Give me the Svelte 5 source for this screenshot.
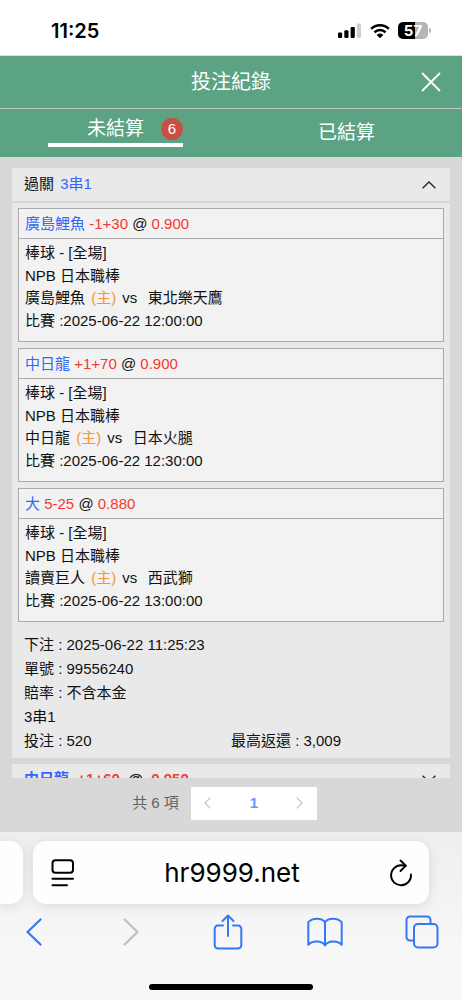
<script>
  const legs = [
    { pick: '廣島鯉魚', line: '-1+30', odds: '0.900', home: '廣島鯉魚', away: '東北樂天鷹', time: '2025-06-22 12:00:00' },
    { pick: '中日龍', line: '+1+70', odds: '0.900', home: '中日龍', away: '日本火腿', time: '2025-06-22 12:30:00' },
    { pick: '大', line: '5-25', odds: '0.880', home: '讀賣巨人', away: '西武獅', time: '2025-06-22 13:00:00' }
  ];
  const details = ['下注 : 2025-06-22 11:25:23', '單號 : 99556240', '賠率 : 不含本金', '3串1'];
</script>

<div class="screen">
  <div class="status">
    <span class="clock">11:25</span>
    <div class="signals">
      <svg width="24" height="16" viewBox="0 0 24 16" aria-hidden="true">
        <rect x="0" y="9.500" width="4.200" height="5.500" rx="1.200" />
        <rect x="6.300" y="7.200" width="4.200" height="7.800" rx="1.200" />
        <rect x="12.600" y="4" width="4.200" height="11" rx="1.200" />
        <rect x="18.900" y="0.500" width="4.200" height="14.500" rx="1.200" fill="#cfcfcf" />
      </svg>
      <svg width="20" height="16" viewBox="0 0 20 16" aria-hidden="true">
        <g fill="none" stroke="#000" stroke-width="2.500">
          <path d="M1.200 5.900a12.600 12.600 0 0 1 17.600 0" />
          <path d="M4.400 9.300a8 8 0 0 1 11.200 0" />
        </g>
        <path d="M10 15.200l-3.300-3.300a4.700 4.700 0 0 1 6.600 0z" />
      </svg>
      <div class="battery"><span>57</span></div>
    </div>
  </div>

  <header>
    <h1>投注紀錄</h1>
    <button class="close" aria-label="關閉">
      <svg width="20" height="20" viewBox="0 0 20 20"><path d="M1 1l18 18M19 1L1 19" fill="none" stroke="#fff" stroke-width="1.800" /></svg>
    </button>
  </header>

  <nav class="tabs">
    <button class="tab active"><span class="label">未結算<span class="count">6</span></span></button>
    <button class="tab">已結算</button>
  </nav>

  <main>
    <div class="list">
      <section class="bet">
        <button class="bet-head">
          <span class="kind">過關 <span class="blue">3串1</span></span>
          <svg width="14" height="8" viewBox="0 0 14 8"><path d="M0.600 7.300L7 1l6.400 6.300" fill="none" stroke="#222" stroke-width="1.300" /></svg>
        </button>
        <div class="legs">
          {#each legs as leg}
            <article>
              <div class="pick"><span class="blue">{leg.pick}</span> <span class="red">{leg.line}</span> @ <span class="red">{leg.odds}</span></div>
              <div class="match">
                <div>棒球 - [全場]</div>
                <div>NPB 日本職棒</div>
                <div>{leg.home} <span class="orange">(主)</span> vs&nbsp; <span class="away">{leg.away}</span></div>
                <div>比賽 :{leg.time}</div>
              </div>
            </article>
          {/each}
        </div>
        <div class="details">
          {#each details as row}<div>{row}</div>{/each}
          <div class="totals"><span>投注 : 520</span><span>最高返還 : 3,009</span></div>
        </div>
      </section>
      <section class="bet">
        <button class="bet-head next">
          <span><span class="blue">中日龍</span>&nbsp; <span class="red">+1+60</span>&nbsp; @&nbsp; <span class="red">0.950</span></span>
          <svg width="14" height="8" viewBox="0 0 14 8"><path d="M0.600 0.700L7 7l6.400-6.300" fill="none" stroke="#222" stroke-width="1.300" /></svg>
        </button>
      </section>
    </div>
    <div class="pager">
      <span>共 6 項</span>
      <div class="pages">
        <button aria-label="上一頁"><svg width="7" height="12" viewBox="0 0 7 12"><path d="M6.300 0.700L1 6l5.300 5.300" fill="none" stroke="#c0c4cc" stroke-width="1.200" /></svg></button>
        <button class="current">1</button>
        <button aria-label="下一頁"><svg width="7" height="12" viewBox="0 0 7 12"><path d="M0.700 0.700L6 6 0.700 11.300" fill="none" stroke="#c0c4cc" stroke-width="1.200" /></svg></button>
      </div>
    </div>
  </main>

  <footer>
    <div class="address-row">
      <div class="previous-tab"></div>
      <div class="address">
        <button aria-label="網頁選單">
          <svg width="24" height="28" viewBox="0 0 24 28"><g fill="none" stroke="#000" stroke-width="2" stroke-linecap="round"><rect x="1.500" y="1.300" width="20.500" height="12.500" rx="3" /><path d="M1.500 19.800h20.500M1.500 26.200h14.500" /></g></svg>
        </button>
        <button class="url">hr9999.net</button>
        <button aria-label="重新載入">
          <svg width="24" height="28" viewBox="0 0 24 28"><g fill="none" stroke="#000" stroke-width="1.900" stroke-linecap="round" stroke-linejoin="round"><path d="M22 15.500A10 10 0 1 1 12 6.300q2.500 0 4.700.5" /><path d="M11.500 1.500l5.300 5.200-5.300 5.300" /></g></svg>
        </button>
      </div>
    </div>
    <div class="tools">
      <button aria-label="返回"><svg width="16" height="28" viewBox="0 0 16 28"><path d="M14.500 1.500L1.500 14l13 12.500" fill="none" stroke="#3478f6" stroke-width="2.200" stroke-linecap="round" stroke-linejoin="round" /></svg></button>
      <button aria-label="前進"><svg width="16" height="28" viewBox="0 0 16 28"><path d="M1.500 1.500l13 12.500-13 12.500" fill="none" stroke="#bfbfbf" stroke-width="2.200" stroke-linecap="round" stroke-linejoin="round" /></svg></button>
      <button aria-label="分享"><svg width="30" height="36" viewBox="0 0 30 36"><g fill="none" stroke="#3478f6" stroke-width="2" stroke-linecap="round" stroke-linejoin="round"><path d="M10 11.500H5a3.300 3.300 0 0 0-3.300 3.300v16.400A3.300 3.300 0 0 0 5 34.500h20a3.300 3.300 0 0 0 3.300-3.300V14.800a3.300 3.300 0 0 0-3.300-3.300h-5M15 22V1.500M9.500 7L15 1.500 20.500 7" /></g></svg></button>
      <button aria-label="書籤"><svg width="36" height="30" viewBox="0 0 36 30"><path d="M18 5.200v23M18 5.200C15 .6 5.500.4 1.300 5.200v22.600c4.200-4.600 13.700-4.200 16.700.6 3-4.800 12.500-5.200 16.700-.6V5.200C30.500.4 21 .6 18 5.200z" fill="none" stroke="#3478f6" stroke-width="2" stroke-linejoin="round" /></svg></button>
      <button aria-label="分頁"><svg width="34" height="34" viewBox="0 0 34 34"><g fill="none" stroke="#3478f6" stroke-width="2"><rect x="9" y="9" width="23.500" height="23.500" rx="4" /><path d="M8.500 25.500H5A3.500 3.500 0 0 1 1.500 22V5A3.500 3.500 0 0 1 5 1.500h17A3.500 3.500 0 0 1 25.500 5v3.500" /></g></svg></button>
    </div>
    <div class="home-bar"></div>
  </footer>
</div>

<style>
  :global(body) {
    margin: 0;
  }
  .screen {
    display: flex;
    flex-direction: column;
    height: 100vh;
    overflow: hidden;
    background: #fff;
    color: #111;
    font: 15px/1.5 "Liberation Sans", "Noto Sans CJK TC", sans-serif;
  }
  button {
    padding: 0;
    border: 0;
    background: none;
    color: inherit;
    font: inherit;
  }
  svg {
    display: block;
  }
  .status {
    display: flex;
    justify-content: space-between;
    align-items: center;
    height: 56px;
    padding: 6px 34px 0 51px;
    box-sizing: border-box;
    border-bottom: 1px solid #cfe3da;
    flex: none;
  }
  .clock {
    font: 600 20px/24px Inter, sans-serif;
    color: #000;
  }
  .signals {
    display: flex;
    align-items: center;
    gap: 8px;
  }
  .battery {
    width: 30px;
    height: 17px;
    border-radius: 5px;
    background: linear-gradient(90deg, #000 57%, #b5b5b5 57%);
    color: #fff;
    font: 700 15px/17px Inter, sans-serif;
    text-align: center;
    position: relative;
  }
  .battery::after {
    content: "";
    position: absolute;
    left: 31px;
    top: 6px;
    width: 2px;
    height: 5px;
    border-radius: 0 2px 2px 0;
    background: #b5b5b5;
  }
  header {
    display: grid;
    grid-template-columns: 1fr auto 1fr;
    align-items: center;
    height: 53px;
    padding: 0 21px;
    border-bottom: 1px solid #c4c9c7;
    box-sizing: border-box;
    background: #5ba383;
    color: #fff;
    flex: none;
  }
  h1 {
    grid-column: 2;
    margin: 0;
    font-size: 20px;
    line-height: 30px;
    font-weight: 400;
  }
  .close {
    justify-self: end;
  }
  .tabs {
    display: grid;
    grid-template-columns: 1fr 1fr;
    height: 48px;
    background: #5ba383;
    color: #fff;
    font-size: 19px;
    line-height: 30px;
    flex: none;
  }
  .label {
    display: inline-flex;
    align-items: center;
    justify-content: flex-end;
    gap: 17px;
    width: 135px;
    height: 38px;
    padding-top: 6px;
    border-bottom: 4px solid #fff;
    box-sizing: border-box;
    vertical-align: top;
  }
  .tab.active {
    padding-bottom: 10px;
  }
  .count {
    width: 22px;
    height: 22px;
    border-radius: 50%;
    background: #c94f45;
    font-size: 15px;
    line-height: 22px;
    text-align: center;
  }
  main {
    display: flex;
    flex-direction: column;
    flex: 1 1 0;
    min-height: 0;
    padding: 11px 12px 0;
    background: #d8d8d8;
  }
  .list {
    display: flex;
    flex-direction: column;
    gap: 6px;
    flex: 1 1 0;
    min-height: 0;
    overflow: hidden;
  }
  .bet {
    flex: none;
    background: #e9e9e9;
  }
  .bet-head {
    display: flex;
    justify-content: space-between;
    align-items: center;
    width: 100%;
    height: 35px;
    padding: 0 14px 0 12px;
    border-bottom: 2px solid #d8d8d8;
  }
  .kind .blue {
    margin-left: 2px;
  }
  .next {
    height: 32px;
    font-weight: 700;
  }
  .legs {
    display: grid;
    gap: 6px;
    padding: 5px 6px 0;
  }
  article {
    border: 1px solid #aaa;
    background: #f2f2f2;
  }
  .pick {
    padding: 0 6px;
    line-height: 29px;
    border-bottom: 1px solid #aaa;
  }
  .match {
    padding: 3px 6px 9px;
  }
  .blue {
    color: #3366ff;
  }
  .red {
    color: #f5392f;
  }
  .orange {
    margin: 0 2px;
    color: #f79433;
  }
  .away {
    margin-left: 2px;
  }
  .details {
    padding: 11px 12px 5px;
    line-height: 24px;
  }
  .totals {
    display: grid;
    grid-template-columns: 1fr 1fr;
  }
  .pager {
    display: flex;
    align-items: center;
    justify-content: center;
    gap: 12px;
    height: 54px;
    padding-right: 13px;
    padding-bottom: 4px;
    box-sizing: border-box;
    color: #606266;
    flex: none;
  }
  .pages {
    display: grid;
    grid-template-columns: 34px 58px 34px;
    height: 33px;
    background: #fff;
  }
  .pages button {
    display: grid;
    place-items: center;
  }
  .pages .current {
    color: #5b9df9;
    font-weight: 700;
  }
  footer {
    flex: none;
    padding-top: 9px;
    background: linear-gradient(#eeeeef, #f7f7f7 70%);
  }
  .address-row {
    display: grid;
    grid-template-columns: 23px 1fr;
    gap: 10px;
    padding-right: 33px;
  }
  .previous-tab,
  .address {
    height: 63px;
    background: #fefefe;
    box-shadow: 0 2px 12px rgba(0, 0, 0, 0.1);
  }
  .previous-tab {
    border-radius: 0 13px 13px 0;
  }
  .address {
    display: flex;
    align-items: center;
    justify-content: space-between;
    padding: 0 16px 0 18px;
    border-radius: 13px;
  }
  .url {
    font: 26px/32px Inter, sans-serif;
    color: #000;
  }
  .tools {
    display: flex;
    justify-content: space-between;
    align-items: center;
    height: 56px;
    padding: 0 22px 0 16px;
  }
  .tools button {
    display: grid;
    place-items: center;
    width: 36px;
  }
  .home-bar {
    width: 164px;
    height: 6px;
    margin: 24px auto 10px;
    border-radius: 3px;
    background: #000;
  }
</style>
